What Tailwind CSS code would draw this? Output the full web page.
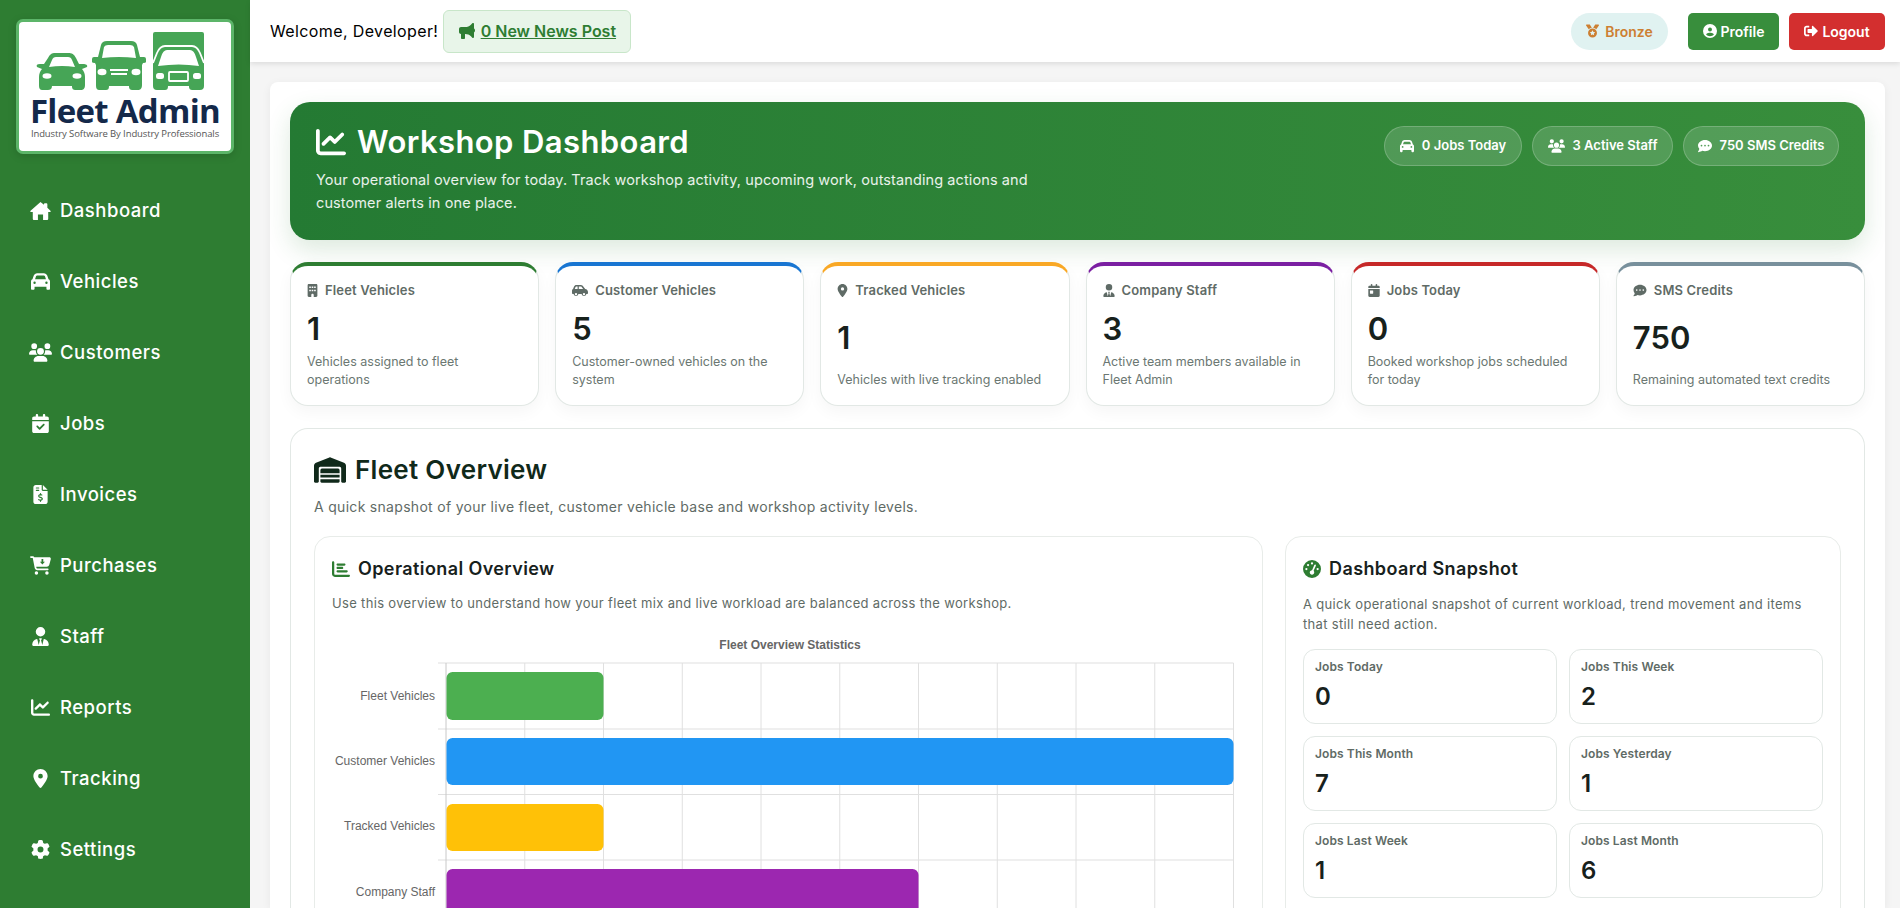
<!DOCTYPE html>
<html lang="en">
<head>
    <meta charset="UTF-8">
    <title>Workshop Dashboard - Fleet Admin</title>
    <script src="https://cdn.jsdelivr.net/npm/@tailwindcss/browser@4"></script>
</head>
<body class="h-screen overflow-hidden bg-[#f5f5f5] font-[Inter,sans-serif] text-[#17211c]">
    <!-- Icon set -->
    <svg class="hidden">
        <symbol id="i-home" viewBox="0 0 24 21"><path d="M12 0 0.4 10.2c-.6.6-.2 1.6.6 1.6H3V19.5c0 .8.7 1.5 1.5 1.5H9v-6.5h6V21h4.5c.8 0 1.5-.7 1.500-1.500V11.800h2c.8 0 1.200-1 .6-1.600L20 6.700V2.500c0-.5-.4-1-1-1h-2c-.6 0-1 .5-1 1v.7z"/></symbol>
        <symbol id="i-car" viewBox="0 0 512 512"><path d="M135.2 117.4L109.1 192H402.9l-26.1-74.6C372.300 104.600 360.200 96 346.600 96H165.400c-13.600 0-25.700 8.600-30.200 21.400zM39.600 196.800L74.800 96.300C88.300 57.800 124.600 32 165.400 32H346.600c40.800 0 77.100 25.800 90.600 64.300l35.200 100.500c23.200 9.600 39.600 32.500 39.600 59.200V400v48c0 17.700-14.300 32-32 32H448c-17.700 0-32-14.300-32-32V400H96v48c0 17.700-14.300 32-32 32H32c-17.700 0-32-14.300-32-32V400 256c0-26.700 16.400-49.600 39.600-59.200zM128 288a32 32 0 1 0 -64 0 32 32 0 1 0 64 0zm288 32a32 32 0 1 0 0-64 32 32 0 1 0 0 64z"/></symbol>
        <symbol id="i-users" viewBox="0 0 640 512"><path d="M144 0a80 80 0 1 1 0 160A80 80 0 1 1 144 0zM512 0a80 80 0 1 1 0 160A80 80 0 1 1 512 0zM0 298.700C0 239.800 47.800 192 106.700 192h42.700c15.900 0 31 3.500 44.600 9.700c-1.300 7.200-1.900 14.700-1.900 22.300c0 38.200 16.800 72.500 43.300 96c-.2 0-.4 0-.7 0H21.300C9.600 320 0 310.400 0 298.700zM405.300 320c-.2 0-.4 0-.7 0c26.600-23.500 43.300-57.800 43.300-96c0-7.600-.7-15-1.900-22.300c13.600-6.300 28.700-9.700 44.600-9.700h42.700C592.200 192 640 239.800 640 298.700c0 11.800-9.600 21.300-21.300 21.300H405.300zM224 224a96 96 0 1 1 192 0 96 96 0 1 1 -192 0zM128 485.300C128 411.700 187.700 352 261.300 352H378.700C452.300 352 512 411.700 512 485.300c0 14.700-11.900 26.700-26.700 26.700H154.700c-14.700 0-26.700-11.900-26.700-26.700z"/></symbol>
        <symbol id="i-cal-check" viewBox="0 0 448 512"><path d="M128 0c17.700 0 32 14.300 32 32V64H288V32c0-17.700 14.300-32 32-32s32 14.300 32 32V64h48c26.500 0 48 21.500 48 48v48H0V112C0 85.500 21.500 64 48 64H96V32c0-17.700 14.300-32 32-32zM0 192H448V464c0 26.500-21.500 48-48 48H48c-26.500 0-48-21.500-48-48V192zM329 305c9.400-9.400 9.400-24.600 0-33.900s-24.600-9.400-33.900 0l-95 95-47-47c-9.400-9.400-24.600-9.400-33.900 0s-9.400 24.600 0 33.900l64 64c9.400 9.400 24.600 9.400 33.900 0L329 305z"/></symbol>
        <symbol id="i-invoice" viewBox="0 0 384 512"><path d="M64 0C28.700 0 0 28.700 0 64V448c0 35.300 28.700 64 64 64H320c35.300 0 64-28.700 64-64V160H256c-17.700 0-32-14.300-32-32V0H64zM256 0V128H384L256 0zM64 80c0-8.800 7.200-16 16-16h64c8.800 0 16 7.200 16 16s-7.200 16-16 16H80c-8.800 0-16-7.200-16-16zm0 64c0-8.800 7.200-16 16-16h64c8.800 0 16 7.200 16 16s-7.200 16-16 16H80c-8.800 0-16-7.200-16-16zm128 72c8.800 0 16 7.200 16 16v17.300c8.500 1.200 16.700 3.100 24.100 5.100c8.500 2.300 13.600 11 11.300 19.600s-11 13.600-19.600 11.300c-11.100-3-22-5.200-32.100-5.300c-8.400-.1-17.400 1.800-23.600 5.500c-5.700 3.400-8.100 7.300-8.100 12.800c0 3.700 1.300 6.500 7.300 10.100c6.900 4.100 16.600 7.100 29.200 10.900l.5 .1c11.300 3.400 25.300 7.600 36.300 14.600c12.100 7.600 22.400 19.700 22.700 38.200c.3 19.300-9.600 33.300-22.900 41.600c-7.700 4.800-16.400 7.600-25.100 9.100V440c0 8.800-7.200 16-16 16s-16-7.200-16-16V422.200c-11.200-2.100-21.700-5.700-30.900-8.900c-2.100-.7-4.200-1.400-6.200-2.100c-8.400-2.800-12.900-11.900-10.100-20.200s11.900-12.900 20.200-10.100c2.500 .8 4.800 1.600 7.100 2.400c13.600 4.600 24.600 8.400 36.300 8.700c9.100 .3 17.900-1.700 23.700-5.300c5.100-3.200 7.900-7.300 7.800-14c-.1-4.600-1.800-7.800-7.700-11.600c-6.800-4.300-16.500-7.400-29-11.200l-1.600-.5c-11-3.300-24.300-7.300-34.800-13.700c-12-7.200-22.600-18.900-22.700-37.300c-.1-19.400 10.800-32.800 23.800-40.500c7.500-4.400 15.800-7.200 24.100-8.700V232c0-8.800 7.200-16 16-16z"/></symbol>
        <symbol id="i-cart" viewBox="0 0 576 512"><path fill-rule="evenodd" d="M24 0C11 0 0 11 0 24s11 24 24 24h45c4 0 7 3 8 6l52 272c6 34 36 58 70 58h289c13 0 24-11 24-24s-11-24-24-24H200c-12 0-21-8-24-20l-5-28h288c33 0 61-22 70-53l41-153c7-25-12-50-39-50H120C111 13 92 0 71 0H24zM316 80h48v70h46l-70 76-70-76h46zM176 512a48 48 0 1 0 0-96 48 48 0 1 0 0 96zM512 464a48 48 0 1 0 -96 0 48 48 0 1 0 96 0z"/></symbol>
        <symbol id="i-tie" viewBox="0 0 448 512"><path d="M96 128a128 128 0 1 0 256 0A128 128 0 1 0 96 128zm94.500 200.200l18.600 31L175.800 483.100l-36-146.900c-2-8.100-9.800-13.400-17.900-11.300C51.900 342.400 0 405.800 0 481.300c0 17 13.800 30.700 30.700 30.700H162.500H168 280h5.500H417.300c17 0 30.700-13.800 30.700-30.700c0-75.500-51.900-138.900-121.900-156.400c-8.100-2-15.900 3.300-17.900 11.300l-36 146.900L238.900 359.200l18.600-31c6.400-10.700-1.300-24.200-13.700-24.200H224 204.300c-12.400 0-20.100 13.600-13.700 24.200z"/></symbol>
        <symbol id="i-chart" viewBox="0 0 512 512"><path d="M64 64c0-17.700-14.300-32-32-32S0 46.300 0 64V400c0 44.200 35.800 80 80 80H480c17.700 0 32-14.300 32-32s-14.300-32-32-32H80c-8.800 0-16-7.200-16-16V64zm406.600 86.600c12.500-12.500 12.500-32.800 0-45.300s-32.800-12.500-45.300 0L320 210.700l-57.400-57.400c-12.500-12.500-32.800-12.500-45.300 0l-112 112c-12.500 12.500-12.500 32.800 0 45.300s32.800 12.500 45.300 0L240 221.300l57.400 57.400c12.500 12.500 32.800 12.500 45.300 0l128-128z"/></symbol>
        <symbol id="i-pin" viewBox="0 0 384 512"><path d="M215.700 499.200C267 435 384 279.400 384 192C384 86 298 0 192 0S0 86 0 192c0 87.400 117 243 168.300 307.200c12.300 15.300 35.100 15.300 47.400 0zM192 128a64 64 0 1 1 0 128 64 64 0 1 1 0-128z"/></symbol>
        <symbol id="i-gear" viewBox="0 0 512 512"><path d="M495.900 166.600c3.200 8.700 .5 18.400-6.400 24.600l-43.300 39.400c1.100 8.300 1.700 16.800 1.700 25.400s-.6 17.100-1.700 25.400l43.300 39.400c6.900 6.200 9.600 15.900 6.400 24.600c-4.400 11.900-9.700 23.300-15.800 34.300l-4.700 8.100c-6.600 11-14 21.400-22.100 31.200c-5.900 7.200-15.700 9.600-24.500 6.800l-55.700-17.700c-13.400 10.300-28.200 18.900-44 25.400l-12.500 57.100c-2 9.100-9 16.300-18.200 17.800c-13.800 2.300-28 3.500-42.500 3.500s-28.700-1.200-42.500-3.500c-9.200-1.500-16.200-8.700-18.200-17.800l-12.500-57.100c-15.800-6.500-30.600-15.100-44-25.400L83.100 425.900c-8.800 2.800-18.600 .3-24.500-6.800c-8.100-9.800-15.500-20.200-22.100-31.200l-4.700-8.100c-6.100-11-11.400-22.400-15.800-34.300c-3.200-8.700-.5-18.400 6.400-24.600l43.300-39.400C64.600 273.100 64 264.600 64 256s.6-17.100 1.700-25.400L22.400 191.200c-6.900-6.200-9.600-15.900-6.400-24.600c4.400-11.900 9.700-23.300 15.800-34.300l4.700-8.100c6.600-11 14-21.400 22.100-31.200c5.900-7.200 15.700-9.600 24.500-6.800l55.700 17.700c13.400-10.300 28.200-18.900 44-25.400l12.500-57.100c2-9.100 9-16.300 18.200-17.800C227.300 1.200 241.500 0 256 0s28.700 1.200 42.500 3.500c9.200 1.500 16.200 8.700 18.200 17.800l12.500 57.100c15.800 6.500 30.600 15.100 44 25.400l55.700-17.700c8.800-2.800 18.600-.3 24.500 6.800c8.100 9.800 15.500 20.200 22.100 31.200l4.700 8.100c6.100 11 11.400 22.400 15.800 34.300zM256 336a80 80 0 1 0 0-160 80 80 0 1 0 0 160z"/></symbol>
        <symbol id="i-bullhorn" viewBox="0 0 512 512"><path d="M480 32c0-12.900-7.800-24.600-19.800-29.600s-25.700-2.200-34.900 6.900L381.700 53c-48 48-113.100 75-181 75H192 160 64c-35.300 0-64 28.700-64 64v96c0 35.300 28.700 64 64 64l0 128c0 17.700 14.300 32 32 32h64c17.700 0 32-14.300 32-32V352l8.700 0c67.900 0 133 27 181 75l43.600 43.600c9.200 9.200 22.900 11.900 34.900 6.900s19.800-16.600 19.800-29.600V300.400c18.600-8.800 32-32.500 32-60.400s-13.400-51.600-32-60.400V32z"/></symbol>
        <symbol id="i-medal" viewBox="0 0 512 512"><path d="M4.100 38.200C1.400 34.200 0 29.400 0 24.600C0 11 11 0 24.600 0H133.900c11.200 0 21.700 5.900 27.400 15.500l68.500 114.100c-48.200 6.100-91.300 28.600-123.400 61.900L4.100 38.200zm503.700 0L405.600 191.500c-32.100-33.300-75.200-55.800-123.400-61.900L350.700 15.500C356.500 5.900 366.900 0 378.100 0H487.400C501 0 512 11 512 24.600c0 4.800-1.400 9.600-4.100 13.600zM80 336a176 176 0 1 1 352 0A176 176 0 1 1 80 336zm184.400-94.900c-3.400-7-13.300-7-16.800 0l-22.400 45.400c-1.400 2.800-4 4.700-7 5.100L168 298.900c-7.700 1.100-10.700 10.500-5.200 16l36.300 35.400c2.200 2.200 3.200 5.200 2.700 8.300l-8.600 49.900c-1.300 7.600 6.700 13.500 13.600 9.900l44.800-23.600c2.700-1.400 6-1.400 8.700 0l44.800 23.600c6.900 3.600 14.900-2.200 13.600-9.900l-8.600-49.900c-.5-3 .5-6.100 2.700-8.300l36.300-35.400c5.600-5.400 2.500-14.800-5.200-16l-50.100-7.300c-3-.4-5.700-2.400-7-5.100l-22.400-45.400z"/></symbol>
        <symbol id="i-user-circle" viewBox="0 0 512 512"><path d="M399 384.200C376.900 345.800 335.400 320 288 320H224c-47.400 0-88.900 25.800-111 64.200c35.200 39.200 86.200 63.800 143 63.800s107.800-24.700 143-63.800zM0 256a256 256 0 1 1 512 0A256 256 0 1 1 0 256zm256 16a72 72 0 1 0 0-144 72 72 0 1 0 0 144z"/></symbol>
        <symbol id="i-logout" viewBox="0 0 512 512"><path d="M497 273L329 441c-15 15-41 4.500-41-17v-96H152c-13.300 0-24-10.700-24-24v-96c0-13.300 10.700-24 24-24h136V88c0-21.400 25.900-32 41-17l168 168c9.300 9.400 9.300 24.600 0 34zM192 436v-40c0-6.600-5.400-12-12-12H96c-17.700 0-32-14.300-32-32V160c0-17.700 14.300-32 32-32h84c6.600 0 12-5.400 12-12V76c0-6.600-5.400-12-12-12H96c-53 0-96 43-96 96v192c0 53 43 96 96 96h84c6.600 0 12-5.400 12-12z"/></symbol>
        <symbol id="i-comment" viewBox="0 0 512 512"><path d="M256 448c141.400 0 256-93.100 256-208S397.400 32 256 32S0 125.100 0 240c0 45.100 17.700 86.800 47.700 120.900c-1.900 24.500-11.400 46.300-21.400 62.900c-5.500 9.200-11.100 16.600-15.200 21.600c-2.100 2.500-3.700 4.400-4.900 5.700c-.6 .6-1 1.100-1.300 1.400l-.3 .3c-4.600 4.600-5.900 11.400-3.400 17.400c2.500 6 8.300 9.900 14.800 9.900c28.700 0 57.600-8.900 81.600-19.300c22.900-10 42.400-21.900 54.300-30.600c31.800 11.500 67 17.900 104.100 17.900zM128 208a32 32 0 1 1 0 64 32 32 0 1 1 0-64zm128 0a32 32 0 1 1 0 64 32 32 0 1 1 0-64zm96 32a32 32 0 1 1 64 0 32 32 0 1 1 -64 0z"/></symbol>
        <symbol id="i-building" viewBox="0 0 384 512"><path d="M48 0C21.500 0 0 21.500 0 48V464c0 26.500 21.500 48 48 48h96V432c0-26.500 21.500-48 48-48s48 21.500 48 48v80h96c26.500 0 48-21.500 48-48V48c0-26.500-21.500-48-48-48H48zM64 240c0-8.800 7.200-16 16-16h32c8.800 0 16 7.200 16 16v32c0 8.800-7.200 16-16 16H80c-8.800 0-16-7.200-16-16V240zm112-16h32c8.800 0 16 7.200 16 16v32c0 8.800-7.200 16-16 16H176c-8.800 0-16-7.200-16-16V240c0-8.800 7.200-16 16-16zm80 16c0-8.800 7.200-16 16-16h32c8.800 0 16 7.200 16 16v32c0 8.800-7.200 16-16 16H272c-8.800 0-16-7.200-16-16V240zM80 96h32c8.800 0 16 7.200 16 16v32c0 8.800-7.200 16-16 16H80c-8.800 0-16-7.200-16-16V112c0-8.800 7.200-16 16-16zm80 16c0-8.800 7.200-16 16-16h32c8.800 0 16 7.200 16 16v32c0 8.800-7.200 16-16 16H176c-8.800 0-16-7.200-16-16V112zM272 96h32c8.800 0 16 7.200 16 16v32c0 8.800-7.200 16-16 16H272c-8.800 0-16-7.200-16-16V112c0-8.800 7.200-16 16-16z"/></symbol>
        <symbol id="i-car-side" viewBox="0 0 640 512"><path d="M171.300 96H224v96H111.300l30.400-75.900C146.500 104 158.200 96 171.300 96zM272 192V96h81.200c9.700 0 18.900 4.400 25 12l67.200 84H272zm256.200 1L428.200 68c-18.200-22.800-45.800-36-75-36H171.300c-39.300 0-74.600 23.900-89.100 60.300L40.600 196.400C16.800 205.800 0 228.900 0 256V368c0 17.700 14.300 32 32 32H65.300c7.600 45.400 47.100 80 94.700 80s87.100-34.600 94.700-80H385.300c7.600 45.400 47.100 80 94.700 80s87.100-34.600 94.700-80H608c17.700 0 32-14.300 32-32V320c0-65.200-48.800-119-111.800-127zM160 352a48 48 0 1 1 0 96 48 48 0 1 1 0-96zm272 48a48 48 0 1 1 96 0 48 48 0 1 1 -96 0z"/></symbol>
        <symbol id="i-cal-day" viewBox="0 0 448 512"><path d="M128 0c17.700 0 32 14.300 32 32V64H288V32c0-17.700 14.300-32 32-32s32 14.300 32 32V64h48c26.500 0 48 21.500 48 48v48H0V112C0 85.500 21.500 64 48 64H96V32c0-17.700 14.300-32 32-32zM0 192H448V464c0 26.500-21.500 48-48 48H48c-26.500 0-48-21.500-48-48V192zm80 64c-8.800 0-16 7.200-16 16v96c0 8.800 7.200 16 16 16h96c8.800 0 16-7.200 16-16V272c0-8.800-7.200-16-16-16H80z"/></symbol>
        <symbol id="i-warehouse" viewBox="0 0 640 512"><path d="M0 488V171.300c0-26.200 15.900-49.700 40.200-59.400L308.100 4.800c7.600-3.100 16.100-3.100 23.800 0L599.800 111.900c24.300 9.700 40.200 33.300 40.200 59.400V488c0 13.300-10.700 24-24 24H568c-13.300 0-24-10.700-24-24V224c0-17.700-14.300-32-32-32H128c-17.700 0-32 14.300-32 32V488c0 13.300-10.700 24-24 24H24c-13.300 0-24-10.700-24-24zM152 512c-13.300 0-24-10.700-24-24V440H512v48c0 13.300-10.700 24-24 24H152zM128 408V352H512v56H128zm0-88V264c0-17.700 7-40 32-40H480c25 0 32 22.300 32 40v56H128z"/></symbol>
        <symbol id="i-bars" viewBox="0 0 512 512"><path d="M32 32c17.700 0 32 14.300 32 32V400c0 8.800 7.200 16 16 16H480c17.700 0 32 14.300 32 32s-14.300 32-32 32H80c-44.200 0-80-35.800-80-80V64C0 46.300 14.300 32 32 32zm96 96c0-17.700 14.300-32 32-32l192 0c17.700 0 32 14.300 32 32s-14.300 32-32 32l-192 0c-17.700 0-32-14.300-32-32zm32 64H288c17.700 0 32 14.300 32 32s-14.300 32-32 32H160c-17.700 0-32-14.300-32-32s14.300-32 32-32zm0 96H416c17.700 0 32 14.300 32 32s-14.300 32-32 32H160c-17.700 0-32-14.300-32-32s14.300-32 32-32z"/></symbol>
        <symbol id="i-gauge" viewBox="0 0 512 512"><path d="M0 256a256 256 0 1 1 512 0A256 256 0 1 1 0 256zM288 96a32 32 0 1 0 -64 0 32 32 0 1 0 64 0zM256 416c35.300 0 64-28.700 64-64c0-17.400-6.900-33.100-18.100-44.600L366 161.700c5.300-12.100-.2-26.300-12.300-31.600s-26.300 .2-31.600 12.300L257.900 288c-.6 0-1.300 0-1.900 0c-35.300 0-64 28.700-64 64s28.700 64 64 64zM176 144a32 32 0 1 0 -64 0 32 32 0 1 0 64 0zM96 288a32 32 0 1 0 0-64 32 32 0 1 0 0 64zm352-32a32 32 0 1 0 -64 0 32 32 0 1 0 64 0z"/></symbol>
    </svg>

    <div class="flex h-screen">
        <!-- Sidebar -->
        <aside class="w-[250px] shrink-0 bg-[#2e7d32] text-white flex flex-col">
            <div class="mx-[16px] mt-[19px] h-[135px] rounded-[7px] border-[3px] border-[#5cb569] bg-white flex flex-col items-center shadow-[0_2px_8px_rgba(0,0,0,0.15)]">
                <svg class="mt-[10px] -ml-[10px] w-[170px] h-[58px] fill-[#46a556]" viewBox="0 0 170 58">
                    <path d="M13 26C15 22 17 21 20 21H33C37 21 39 22 41 26L44 32H48C51 32 53 33 52 35L47 37C49 39 50 42 50 45V53C50 57 48 58 46 58H41C38 58 37 57 37 54H17C17 57 15 58 13 58H8C5 58 4 57 4 53V45C4 42 5 39 7 37L2 35C1 33 2 32 5 32H9Z"/>
                    <path fill="#fff" d="M14 35 17 28Q18 25 21 25H33Q36 25 37 28L40 35Q27 33 14 35Z"/>
                    <ellipse fill="#fff" cx="12" cy="44" rx="4.500" ry="2.800"/>
                    <ellipse fill="#fff" cx="42" cy="44" rx="4.500" ry="2.800"/>
                    <path d="M66 13Q67 9 72 9H96Q101 9 102 13L105 25H109Q111 25 111 27V30Q111 31 108 31L107 33V53C107 57 105 58 103 58H98C95 58 94 57 94 54H74C74 57 73 58 71 58H65C62 58 61 57 61 53V33L60 31Q57 31 57 30V27Q57 25 59 25H63Z"/>
                    <path fill="#fff" d="M67 26 69 15Q70 13 73 13H95Q98 13 99 15L101 26Q84 24 67 26Z"/>
                    <ellipse fill="#fff" cx="67" cy="40" rx="4.500" ry="3.200"/>
                    <ellipse fill="#fff" cx="101" cy="40" rx="4.500" ry="3.200"/>
                    <rect fill="#fff" x="75" y="37" width="18" height="2"/>
                    <rect fill="#fff" x="76" y="41" width="16" height="2"/>
                    <path d="M118 2Q118 0 120 0H167Q169 0 169 2V54Q169 58 165 58H158C155 58 154 57 154 54H133C133 57 132 58 130 58H122Q118 58 118 54Z"/>
                    <path fill="none" stroke="#fff" stroke-width="1.800" d="M118 31 122 21Q125 14 130 14H157Q162 14 165 21L169 31"/>
                    <path fill="#fff" d="M123 34 126 25Q128 18 132 18H155Q159 18 161 25L164 34Q144 31 123 34Z"/>
                    <rect fill="#fff" x="121" y="41" width="8" height="6" rx="2.500"/>
                    <rect fill="#fff" x="158" y="41" width="8" height="6" rx="2.500"/>
                    <rect fill="none" stroke="#fff" stroke-width="1.800" x="134" y="40" width="19" height="9" rx="1"/>
                </svg>
                <div class="mt-[3px] text-[33px] leading-[35px] font-bold font-['Open_Sans',sans-serif] text-[#14294a] tracking-[-0.7px]">Fleet Admin</div>
                <div class="text-[9.500px] leading-[12px] font-['Open_Sans',sans-serif] text-[#555] tracking-[-0.1px]">Industry Software By Industry Professionals</div>
            </div>
            <nav class="mt-[21px] text-[18.500px] font-medium tracking-[0.5px]">
                <a class="flex items-center h-[71px] pl-[29px]"><span class="w-[23px] mr-[8px] flex justify-center"><svg class="w-[21px] h-[18px] fill-current"><use href="#i-home"/></svg></span>Dashboard</a>
                <a class="flex items-center h-[71px] pl-[29px]"><span class="w-[23px] mr-[8px] flex justify-center"><svg class="w-[19px] h-[19px] fill-current"><use href="#i-car"/></svg></span>Vehicles</a>
                <a class="flex items-center h-[71px] pl-[29px]"><span class="w-[23px] mr-[8px] flex justify-center"><svg class="w-[23px] h-[19px] fill-current"><use href="#i-users"/></svg></span>Customers</a>
                <a class="flex items-center h-[71px] pl-[29px]"><span class="w-[23px] mr-[8px] flex justify-center"><svg class="w-[17px] h-[19px] fill-current"><use href="#i-cal-check"/></svg></span>Jobs</a>
                <a class="flex items-center h-[71px] pl-[29px]"><span class="w-[23px] mr-[8px] flex justify-center"><svg class="w-[15px] h-[19px] fill-current"><use href="#i-invoice"/></svg></span>Invoices</a>
                <a class="flex items-center h-[71px] pl-[29px]"><span class="w-[23px] mr-[8px] flex justify-center"><svg class="w-[21px] h-[19px] fill-current"><use href="#i-cart"/></svg></span>Purchases</a>
                <a class="flex items-center h-[71px] pl-[29px]"><span class="w-[23px] mr-[8px] flex justify-center"><svg class="w-[17px] h-[19px] fill-current"><use href="#i-tie"/></svg></span>Staff</a>
                <a class="flex items-center h-[71px] pl-[29px]"><span class="w-[23px] mr-[8px] flex justify-center"><svg class="w-[19px] h-[19px] fill-current"><use href="#i-chart"/></svg></span>Reports</a>
                <a class="flex items-center h-[71px] pl-[29px]"><span class="w-[23px] mr-[8px] flex justify-center"><svg class="w-[15px] h-[19px] fill-current"><use href="#i-pin"/></svg></span>Tracking</a>
                <a class="flex items-center h-[71px] pl-[29px]"><span class="w-[23px] mr-[8px] flex justify-center"><svg class="w-[19px] h-[19px] fill-current"><use href="#i-gear"/></svg></span>Settings</a>
            </nav>
        </aside>

        <!-- Main -->
        <div class="flex-1 min-w-0 flex flex-col">
            <header class="h-[62px] shrink-0 bg-white shadow-[0_2px_5px_rgba(0,0,0,0.1)] pl-[20px] pr-[15px] flex items-center justify-between relative">
                <div class="flex items-center">
                    <span class="text-[16px] text-black tracking-[0.38px]">Welcome, Developer!</span>
                    <a class="ml-[5px] h-[43px] w-[188px] rounded-[6px] bg-[#e8f5e9] border border-[#c8e6c9] text-[#2e7d32] flex items-center justify-center gap-[6px] text-[16px] font-semibold">
                        <svg class="w-[16px] h-[16px] fill-current"><use href="#i-bullhorn"/></svg><span class="underline">0 New News Post</span>
                    </a>
                </div>
                <div class="flex items-center">
                    <span class="h-[37px] w-[97px] rounded-full bg-[#e0f2f1] text-[#cd7f32] flex items-center justify-center gap-[6px] text-[14px] font-semibold"><svg class="w-[13px] h-[14px] fill-current"><use href="#i-medal"/></svg>Bronze</span>
                    <a class="ml-[20px] h-[37px] w-[91px] rounded-[5px] bg-[#388e3c] text-white flex items-center justify-center gap-[4px] text-[14px] font-semibold"><svg class="w-[14px] h-[14px] fill-current"><use href="#i-user-circle"/></svg>Profile</a>
                    <a class="ml-[10px] h-[37px] w-[96px] rounded-[5px] bg-[#d32f2f] text-white flex items-center justify-center gap-[4px] text-[14px] font-semibold"><svg class="w-[14px] h-[14px] fill-current"><use href="#i-logout"/></svg>Logout</a>
                </div>
            </header>

            <main class="flex-1 min-h-0 pl-[20px] pr-[15px] pt-[20px]">
                <div class="h-full overflow-hidden bg-white rounded-t-[8px] shadow-[0_2px_10px_rgba(0,0,0,0.06)] px-[20px] pt-[20px]">
                    <!-- Hero -->
                    <section class="h-[138px] rounded-[20px] bg-linear-to-r from-[#247a33] to-[#388e3c] text-white pl-[26px] pr-[26px] pt-[24px] flex justify-between shadow-[0_10px_24px_rgba(46,125,50,0.16)]">
                        <div>
                            <h1 class="flex items-center text-[31px] leading-[32px] font-semibold tracking-[0.4px]"><svg class="w-[30px] h-[30px] mr-[11px] fill-current"><use href="#i-chart"/></svg>Workshop Dashboard</h1>
                            <p class="mt-[10px] text-[14.500px] leading-[23px] text-white/90 tracking-[0.1px]">Your operational overview for today. Track workshop activity, upcoming work, outstanding actions and<br>customer alerts in one place.</p>
                        </div>
                        <div class="flex gap-[10px]">
                            <span class="h-[40px] w-[138px] rounded-full bg-white/15 border border-white/20 flex items-center justify-center gap-[8px] text-[13px] font-semibold"><svg class="w-[14px] h-[14px] fill-current"><use href="#i-car"/></svg>0 Jobs Today</span>
                            <span class="h-[40px] w-[141px] rounded-full bg-white/15 border border-white/20 flex items-center justify-center gap-[8px] text-[13px] font-semibold"><svg class="w-[17px] h-[14px] fill-current"><use href="#i-users"/></svg>3 Active Staff</span>
                            <span class="h-[40px] w-[156px] rounded-full bg-white/15 border border-white/20 flex items-center justify-center gap-[8px] text-[13px] font-semibold"><svg class="w-[14px] h-[14px] fill-current"><use href="#i-comment"/></svg>750 SMS Credits</span>
                        </div>
                    </section>

                    <!-- Stat cards -->
                    <div class="mt-[22px] grid grid-cols-6 gap-[16px]">
                        <div class="h-[144px] rounded-[18px] border border-[#e2e8e5] border-t-4 border-t-[#2e7d32] bg-white px-[16px] pt-[14px] pb-[16px] flex flex-col shadow-[0_6px_16px_rgba(0,0,0,0.04)]">
                            <div class="flex items-center gap-[7px] text-[13px] leading-[20px] font-semibold text-[#5f6b66] tracking-[0.15px]"><svg class="w-[11px] h-[13px] fill-current"><use href="#i-building"/></svg>Fleet Vehicles</div>
                            <div class="my-auto pt-[5px] text-[31px] leading-[36px] font-semibold">1</div>
                            <p class="text-[12.500px] leading-[18px] text-[#6b7772]">Vehicles assigned to fleet<br>operations</p>
                        </div>
                        <div class="h-[144px] rounded-[18px] border border-[#e2e8e5] border-t-4 border-t-[#1976d2] bg-white px-[16px] pt-[14px] pb-[16px] flex flex-col shadow-[0_6px_16px_rgba(0,0,0,0.04)]">
                            <div class="flex items-center gap-[7px] text-[13px] leading-[20px] font-semibold text-[#5f6b66] tracking-[0.15px]"><svg class="w-[16px] h-[13px] fill-current"><use href="#i-car-side"/></svg>Customer Vehicles</div>
                            <div class="my-auto pt-[5px] text-[31px] leading-[36px] font-semibold">5</div>
                            <p class="text-[12.500px] leading-[18px] text-[#6b7772]">Customer-owned vehicles on the<br>system</p>
                        </div>
                        <div class="h-[144px] rounded-[18px] border border-[#e2e8e5] border-t-4 border-t-[#f9a825] bg-white px-[16px] pt-[14px] pb-[16px] flex flex-col shadow-[0_6px_16px_rgba(0,0,0,0.04)]">
                            <div class="flex items-center gap-[7px] text-[13px] leading-[20px] font-semibold text-[#5f6b66] tracking-[0.15px]"><svg class="w-[11px] h-[13px] fill-current"><use href="#i-pin"/></svg>Tracked Vehicles</div>
                            <div class="my-auto pt-[5px] text-[31px] leading-[36px] font-semibold">1</div>
                            <p class="text-[12.500px] leading-[18px] text-[#6b7772]">Vehicles with live tracking enabled</p>
                        </div>
                        <div class="h-[144px] rounded-[18px] border border-[#e2e8e5] border-t-4 border-t-[#7b1fa2] bg-white px-[16px] pt-[14px] pb-[16px] flex flex-col shadow-[0_6px_16px_rgba(0,0,0,0.04)]">
                            <div class="flex items-center gap-[7px] text-[13px] leading-[20px] font-semibold text-[#5f6b66] tracking-[0.15px]"><svg class="w-[12px] h-[13px] fill-current"><use href="#i-tie"/></svg>Company Staff</div>
                            <div class="my-auto pt-[5px] text-[31px] leading-[36px] font-semibold">3</div>
                            <p class="text-[12.500px] leading-[18px] text-[#6b7772]">Active team members available in<br>Fleet Admin</p>
                        </div>
                        <div class="h-[144px] rounded-[18px] border border-[#e2e8e5] border-t-4 border-t-[#c62828] bg-white px-[16px] pt-[14px] pb-[16px] flex flex-col shadow-[0_6px_16px_rgba(0,0,0,0.04)]">
                            <div class="flex items-center gap-[7px] text-[13px] leading-[20px] font-semibold text-[#5f6b66] tracking-[0.15px]"><svg class="w-[12px] h-[13px] fill-current"><use href="#i-cal-day"/></svg>Jobs Today</div>
                            <div class="my-auto pt-[5px] text-[31px] leading-[36px] font-semibold">0</div>
                            <p class="text-[12.500px] leading-[18px] text-[#6b7772]">Booked workshop jobs scheduled<br>for today</p>
                        </div>
                        <div class="h-[144px] rounded-[18px] border border-[#e2e8e5] border-t-4 border-t-[#78909c] bg-white px-[16px] pt-[14px] pb-[16px] flex flex-col shadow-[0_6px_16px_rgba(0,0,0,0.04)]">
                            <div class="flex items-center gap-[7px] text-[13px] leading-[20px] font-semibold text-[#5f6b66] tracking-[0.15px]"><svg class="w-[14px] h-[13px] fill-current"><use href="#i-comment"/></svg>SMS Credits</div>
                            <div class="my-auto pt-[5px] text-[31px] leading-[36px] font-semibold">750</div>
                            <p class="text-[12.500px] leading-[18px] text-[#6b7772]">Remaining automated text credits</p>
                        </div>
                    </div>

                    <!-- Fleet overview -->
                    <section class="mt-[22px] rounded-t-[18px] border border-b-0 border-[#e2e8e5] px-[23px] pt-[23px] h-[600px]">
                        <h2 class="flex items-center text-[26px] leading-[36px] font-semibold text-[#10291a] tracking-[0.3px]"><svg class="w-[32px] h-[26px] mr-[9px] fill-current"><use href="#i-warehouse"/></svg>Fleet Overview</h2>
                        <p class="mt-[9px] text-[14px] leading-[20px] text-[#5f6b66] tracking-[0.3px]">A quick snapshot of your live fleet, customer vehicle base and workshop activity levels.</p>

                        <div class="mt-[18.500px] grid grid-cols-[949px_556px] gap-[22px]">
                            <!-- Operational overview -->
                            <div class="rounded-[16px] border border-[#e8ece9] px-[17px] pt-[20px] h-[500px]">
                                <h3 class="flex items-center text-[18px] leading-[24px] font-semibold text-[#17211c] tracking-[0.4px]"><svg class="w-[18px] h-[18px] mr-[8px] fill-[#2e7d32]"><use href="#i-bars"/></svg>Operational Overview</h3>
                                <p class="mt-[12px] text-[13px] leading-[20px] text-[#5f6b66] tracking-[0.33px]">Use this overview to understand how your fleet mix and live workload are balanced across the workshop.</p>
                                <svg class="mt-[22px] block w-[915px] h-[300px] font-['Liberation_Sans',sans-serif]" viewBox="332 635 915 300">
                                    <text x="790" y="649" text-anchor="middle" font-size="12" font-weight="700" fill="#666">Fleet Overview Statistics</text>
                                    <g stroke="#e0e0e0" stroke-width="1" fill="none">
                                        <path d="M524.750 663V925M603.500 663V925M682.250 663V925M761 663V925M839.750 663V925M918.500 663V925M997.250 663V925M1076 663V925M1154.750 663V925M1233.500 663V925"/>
                                        <path stroke-width="1.200" d="M438 663H1233.500M438 729H1233.500M438 794.500H1233.500M438 860H1233.500M438 925H1233.500"/>
                                        <path stroke="#c8c8c8" d="M446 663V925"/>
                                    </g>
                                    <rect x="446.500" y="672" width="157" height="48" rx="6" fill="#4caf50"/>
                                    <rect x="446.500" y="738" width="787" height="47" rx="6" fill="#2196f3"/>
                                    <rect x="446.500" y="804" width="157" height="47" rx="6" fill="#ffc107"/>
                                    <rect x="446.500" y="869" width="472" height="60" rx="6" fill="#9c27b0"/>
                                    <g font-size="12" fill="#666" text-anchor="end">
                                        <text x="435" y="700">Fleet Vehicles</text>
                                        <text x="435" y="765">Customer Vehicles</text>
                                        <text x="435" y="830">Tracked Vehicles</text>
                                        <text x="435" y="896">Company Staff</text>
                                    </g>
                                </svg>
                            </div>

                            <!-- Dashboard snapshot -->
                            <div class="rounded-[16px] border border-[#e8ece9] px-[17px] pt-[20px] h-[500px]">
                                <h3 class="flex items-center text-[18px] leading-[24px] font-semibold text-[#17211c] tracking-[0.4px]"><svg class="w-[18px] h-[18px] mr-[8px] fill-[#2e7d32]"><use href="#i-gauge"/></svg>Dashboard Snapshot</h3>
                                <p class="mt-[13px] text-[13px] leading-[20px] text-[#5f6b66] tracking-[0.33px]">A quick operational snapshot of current workload, trend movement and items<br>that still need action.</p>
                                <div class="mt-[15px] grid grid-cols-2 gap-[12px]">
                                    <div class="h-[75px] rounded-[12px] border border-[#e2e8e5] px-[11px] pt-[8px]"><div class="text-[12px] leading-[18px] font-semibold text-[#5f6b66] tracking-[0.1px]">Jobs Today</div><div class="mt-[5px] text-[24px] leading-[32px] font-semibold">0</div></div>
                                    <div class="h-[75px] rounded-[12px] border border-[#e2e8e5] px-[11px] pt-[8px]"><div class="text-[12px] leading-[18px] font-semibold text-[#5f6b66] tracking-[0.1px]">Jobs This Week</div><div class="mt-[5px] text-[24px] leading-[32px] font-semibold">2</div></div>
                                    <div class="h-[75px] rounded-[12px] border border-[#e2e8e5] px-[11px] pt-[8px]"><div class="text-[12px] leading-[18px] font-semibold text-[#5f6b66] tracking-[0.1px]">Jobs This Month</div><div class="mt-[5px] text-[24px] leading-[32px] font-semibold">7</div></div>
                                    <div class="h-[75px] rounded-[12px] border border-[#e2e8e5] px-[11px] pt-[8px]"><div class="text-[12px] leading-[18px] font-semibold text-[#5f6b66] tracking-[0.1px]">Jobs Yesterday</div><div class="mt-[5px] text-[24px] leading-[32px] font-semibold">1</div></div>
                                    <div class="h-[75px] rounded-[12px] border border-[#e2e8e5] px-[11px] pt-[8px]"><div class="text-[12px] leading-[18px] font-semibold text-[#5f6b66] tracking-[0.1px]">Jobs Last Week</div><div class="mt-[5px] text-[24px] leading-[32px] font-semibold">1</div></div>
                                    <div class="h-[75px] rounded-[12px] border border-[#e2e8e5] px-[11px] pt-[8px]"><div class="text-[12px] leading-[18px] font-semibold text-[#5f6b66] tracking-[0.1px]">Jobs Last Month</div><div class="mt-[5px] text-[24px] leading-[32px] font-semibold">6</div></div>
                                </div>
                            </div>
                        </div>
                    </section>
                </div>
            </main>
        </div>
    </div>
</body>
</html>
